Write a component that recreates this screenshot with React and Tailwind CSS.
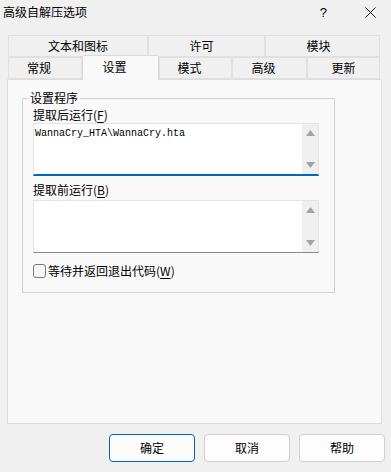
// App.jsx — 高级自解压选项 dialog (设置 tab)

import React from 'react';

const cjk = { fontFamily: '"Noto Sans CJK SC", "Liberation Sans", sans-serif' };

function Accel({ label, letter }) {
  return (
    <span>
      {label}(<span className="underline underline-offset-2">{letter}</span>)
    </span>
  );
}

function ScrollArrows() {
  return (
    <div className="flex w-[16px] flex-col items-center justify-between bg-[#efefef] py-[6px]">
      <svg width="9" height="6" viewBox="0 0 9 6">
        <path d="M4.5 0 L9 6 L0 6 Z" fill="#a3a3a3" />
      </svg>
      <svg width="9" height="6" viewBox="0 0 9 6">
        <path d="M0 0 L9 0 L4.5 6 Z" fill="#a3a3a3" />
      </svg>
    </div>
  );
}

function Field({ focused, children }) {
  return (
    <div
      className={`flex h-[53px] w-[286px] border border-[#e3e3e3] bg-white ${
        focused ? 'border-b-2 border-b-[#0067c0]' : 'border-b-[#8a8a8a]'
      }`}
    >
      <div className="flex-1 pl-[1px] pt-[3px]">{children}</div>
      <ScrollArrows />
    </div>
  );
}

function Tab({ label, w, selected, pr = 'pr-[12px]' }) {
  if (selected) {
    return (
      <div
        className={`relative z-10 -mb-px flex h-[25px] ${w} items-center justify-center ${pr} rounded-t-[2px] border border-b-0 border-[#dadada] bg-[#f9f9f9] pb-[2px]`}
      >
        {label}
      </div>
    );
  }
  return (
    <div
      className={`flex h-[22px] ${w} items-center justify-center ${pr} border border-[#e0e0e0] bg-[#f0f0f0]`}
    >
      {label}
    </div>
  );
}

function Button({ label, primary }) {
  return (
    <div
      className={`flex h-[28px] w-[86px] items-center justify-center rounded-[4px] bg-[#fdfdfd] ${
        primary ? 'border border-[#0067c0]' : 'border border-[#d0d0d0]'
      }`}
    >
      {label}
    </div>
  );
}

export default function App() {
  return (
    <div className="flex h-[472px] w-[391px] flex-col bg-[#f0f0f0] text-[12px] leading-none text-black" style={cjk}>
      {/* 标题栏 */}
      <div className="flex h-[25px] items-center pl-[3px] pr-[15px] pb-[1px]">
        <span className="flex-1 text-[12px]">高级自解压选项</span>
        <span className="mr-[38px] text-[13px]" style={{ fontFamily: '"Liberation Sans", sans-serif' }}>?</span>
        <svg width="11" height="11" viewBox="0 0 11 11">
          <path d="M0.5 0.5 L10.5 10.5 M10.5 0.5 L0.5 10.5" stroke="#1a1a1a" strokeWidth="1" />
        </svg>
      </div>

      {/* 选项卡 */}
      <div className="ml-[8px] mt-[10px] flex w-[372px]">
        <Tab label="文本和图标" w="w-[140px]" pr="pr-0" />
        <Tab label="许可" w="w-[117px]" pr="pr-[10px]" />
        <Tab label="模块" w="w-[115px]" pr="pr-[8px]" />
      </div>
      <div className="ml-[8px] flex h-[22px] w-[372px] items-end">
        <Tab label="常规" w="w-[74px]" />
        <Tab label="设置" w="w-[77px]" selected />
        <Tab label="模式" w="w-[73px]" />
        <Tab label="高级" w="w-[75px]" />
        <Tab label="更新" w="w-[73px]" pr="pr-[0px]" />
      </div>

      {/* 页面 */}
      <div className="ml-[7px] h-[345px] w-[375px] border border-[#dcdcdc] bg-[#f9f9f9] pl-[14px] pt-[18px]">
        <div className="relative h-[195px] w-[313px] border border-[#d3d3d3] pl-[10px] pt-[10px]">
          <span className="absolute -top-[7px] left-[5px] bg-[#f9f9f9] px-[2px]">设置程序</span>
          <div className="mb-[2px]">
            <Accel label="提取后运行" letter="F" />
          </div>
          <Field focused>
            <div className="text-[10px] leading-[14px]" style={{ fontFamily: '"Liberation Mono", monospace' }}>
              {'WannaCry_HTA\\WannaCry.hta'}
            </div>
          </Field>
          <div className="mb-[4px] mt-[8px]">
            <Accel label="提取前运行" letter="B" />
          </div>
          <Field />
          <div className="mt-[11px] flex items-center gap-[2px]">
            <div className="h-[14px] w-[13px] rounded-[3px] border border-[#7a7a7a] bg-[#f7f7f7]" />
            <Accel label="等待并返回退出代码" letter="W" />
          </div>
        </div>
      </div>

      {/* 按钮 */}
      <div className="mr-[6px] mt-[10px] flex justify-end gap-[9px]">
        <Button label="确定" primary />
        <Button label="取消" />
        <Button label="帮助" />
      </div>
    </div>
  );
}
